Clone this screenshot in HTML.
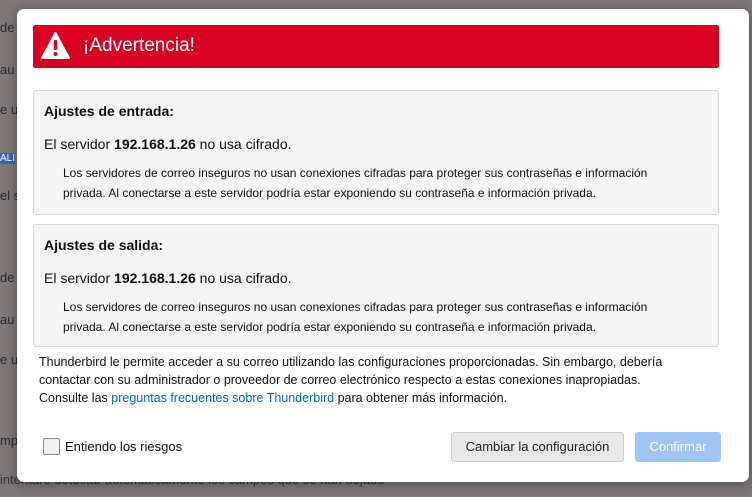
<!DOCTYPE html>
<html><head><meta charset="utf-8"><style>
body{margin:0;width:752px;height:497px;overflow:hidden;background:#7f7878;font-family:"Liberation Sans",sans-serif;position:relative}
.bgt{position:absolute;left:0;font-size:13px;color:#2a2a2a}
.dlg{position:absolute;left:17px;top:9px;width:732px;height:473px;background:#fff;border-radius:7px;box-shadow:0 2px 12px rgba(0,0,0,.4)}
.ban{position:absolute;left:16px;top:16px;width:686px;height:43px;background:#d70022;border-radius:2px;color:#fff;font-size:19px}
.ban span{position:absolute;left:50px;top:10px}
.box{position:absolute;left:16px;width:684px;height:123px;background:#f5f5f5;border:1px solid #d8d8d8;border-radius:3px;color:#111}
.box h3{margin:0;position:absolute;left:10px;top:12px;font-size:14px}
.box .l1{position:absolute;left:10px;top:45px;font-size:14px}
.box .l2{position:absolute;left:29px;top:72px;font-size:12px;line-height:20px;width:620px}
.foot{position:absolute;left:22px;top:344px;font-size:12.5px;line-height:18px;color:#111;width:640px}
a{color:#0a5fd6;text-decoration:none}
.btn{position:absolute;top:423px;height:28px;border-radius:3px;font-size:13px;text-align:center;line-height:28px}
</style></head><body>
<div class="bgt" style="top:20px">de</div>
<div class="bgt" style="top:62px">au</div>
<div class="bgt" style="top:102px">e us</div>
<div class="bgt" style="top:153px;background:#3b66a8;color:#fff;font-size:10px">ALI</div>
<div class="bgt" style="top:188px">el se</div>
<div class="bgt" style="top:270px">de</div>
<div class="bgt" style="top:312px">au</div>
<div class="bgt" style="top:352px">e us</div>
<div class="bgt" style="top:433px">mp</div>
<div class="bgt" style="top:472px;color:#333">intentaré detectar automáticamente los campos que se han dejado</div>
<div class="dlg">
<div class="ban"><svg style="position:absolute;left:8px;top:7px" width="29" height="28" viewBox="0 0 29 28"><path d="M14.5 1 L28 26 H1 Z" fill="#fff" stroke="#fff" stroke-width="2" stroke-linejoin="round"/><rect x="12.7" y="8" width="3.6" height="10" rx="1.5" fill="#d70022"/><circle cx="14.5" cy="22" r="2" fill="#d70022"/></svg><span>¡Advertencia!</span></div>
<div class="box" style="top:81px"><h3>Ajustes de entrada:</h3><div class="l1">El servidor <b>192.168.1.26</b> no usa cifrado.</div><div class="l2">Los servidores de correo inseguros no usan conexiones cifradas para proteger sus contraseñas e información privada. Al conectarse a este servidor podría estar exponiendo su contraseña e información privada.</div></div>
<div class="box" style="top:215px;height:121px"><h3>Ajustes de salida:</h3><div class="l1">El servidor <b>192.168.1.26</b> no usa cifrado.</div><div class="l2">Los servidores de correo inseguros no usan conexiones cifradas para proteger sus contraseñas e información privada. Al conectarse a este servidor podría estar exponiendo su contraseña e información privada.</div></div>
<div class="foot">Thunderbird le permite acceder a su correo utilizando las configuraciones proporcionadas. Sin embargo, debería contactar con su administrador o proveedor de correo electrónico respecto a estas conexiones inapropiadas. Consulte las <a>preguntas frecuentes sobre Thunderbird</a> para obtener más información.</div>
<div style="position:absolute;left:26px;top:429px;width:15px;height:15px;border:1px solid #8a8a8a;border-radius:2px;background:#f0f0f0"></div>
<div style="position:absolute;left:48px;top:430px;font-size:13px;color:#111">Entiendo los riesgos</div>
<div class="btn" style="left:434px;width:171px;background:#e8e8e8;border:1px solid #ccc;color:#222">Cambiar la configuración</div>
<div class="btn" style="left:618px;width:84px;background:#a0c4f3;color:#fff;border:1px solid #a0c4f3">Confirmar</div>
</div>
</body></html>
